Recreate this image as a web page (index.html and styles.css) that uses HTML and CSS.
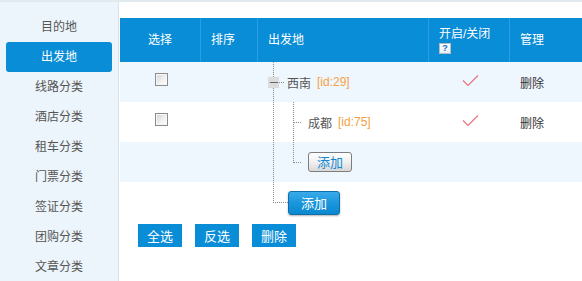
FILE: index.html
```html
<!DOCTYPE html>
<html lang="zh-CN">
<head>
<meta charset="utf-8">
<title>出发地</title>
<link rel="stylesheet" href="styles.css">
</head>
<body>
<div class="page">
  <aside class="side">
    <a class="side-item">目的地</a>
    <a class="side-item active">出发地</a>
    <a class="side-item">线路分类</a>
    <a class="side-item">酒店分类</a>
    <a class="side-item">租车分类</a>
    <a class="side-item">门票分类</a>
    <a class="side-item">签证分类</a>
    <a class="side-item">团购分类</a>
    <a class="side-item">文章分类</a>
  </aside>
  <main class="main">
    <table class="grid">
      <colgroup>
        <col class="c-sel"><col class="c-sort"><col class="c-name"><col class="c-open"><col class="c-mng">
      </colgroup>
      <thead>
        <tr>
          <th class="center">选择</th>
          <th>排序</th>
          <th>出发地</th>
          <th class="th-open">开启/关闭<br><span class="help">?</span></th>
          <th>管理</th>
        </tr>
      </thead>
      <tbody>
        <tr class="alt">
          <td class="center"><input type="checkbox" class="cb"></td>
          <td></td>
          <td class="tree tree-1">
            <div class="node">
              <span class="minus"><span class="minus-bar"></span></span>
              <span class="hdots short"></span>
              <span class="name">西南</span>
              <span class="nid">[id:29]</span>
            </div>
          </td>
          <td class="center"><svg class="check" width="17" height="13" viewBox="0 0 17 13"><polyline points="1,6.5 6,11.5 16,1.5" fill="none" stroke="#e9727c" stroke-width="1.2"/></svg></td>
          <td><a class="del">删除</a></td>
        </tr>
        <tr>
          <td class="center"><input type="checkbox" class="cb"></td>
          <td></td>
          <td class="tree tree-2">
            <div class="node sub">
              <span class="hdots long"></span>
              <span class="name">成都</span>
              <span class="nid">[id:75]</span>
            </div>
          </td>
          <td class="center"><svg class="check" width="17" height="13" viewBox="0 0 17 13"><polyline points="1,6.5 6,11.5 16,1.5" fill="none" stroke="#e9727c" stroke-width="1.2"/></svg></td>
          <td><a class="del">删除</a></td>
        </tr>
        <tr class="alt">
          <td></td>
          <td></td>
          <td class="tree tree-3">
            <div class="node sub">
              <span class="hdots long"></span>
              <button class="btn-gray">添加</button>
            </div>
          </td>
          <td></td>
          <td></td>
        </tr>
      </tbody>
    </table>
    <div class="tree-add">
      <span class="elbow"></span>
      <button class="btn-add">添加</button>
    </div>
    <div class="actions">
      <button class="btn-flat">全选</button>
      <button class="btn-flat">反选</button>
      <button class="btn-flat">删除</button>
    </div>
  </main>
</div>
</body>
</html>
```

FILE: styles.css
```css
* { box-sizing: border-box; }

html, body {
  margin: 0;
  padding: 0;
  background: #fff;
}

body {
  font-family: "Liberation Sans", "Noto Sans CJK SC", sans-serif;
  font-size: 12px;
  color: #555;
  overflow: hidden;
}

.page {
  display: flex;
  min-height: 100vh;
  border-top: 2px solid #e2e9ef;
}

/* sidebar */
.side {
  width: 119px;
  flex: none;
  background: #edf5fc;
  border-right: 1px solid #d6e2ec;
  padding-top: 10px;
}

.side-item {
  display: block;
  height: 30px;
  line-height: 30px;
  margin: 0 6px;
  text-align: center;
  font-size: 12px;
  color: #555;
  border-radius: 3px;
}

.side-item.active {
  background: #0a8dd7;
  color: #fff;
}

/* main */
.main {
  flex: 1;
  padding: 16px 0 0 1px;
}

.grid {
  table-layout: fixed;
  border-collapse: separate;
  border-spacing: 0;
  width: 462px;
}

.c-sel { width: 80px; }
.c-sort { width: 57px; }
.c-name { width: 171px; }
.c-open { width: 81px; }
.c-mng { width: 73px; }

.grid th {
  height: 44px;
  padding: 0 10px;
  background: #0a8dd7;
  color: #fff;
  font-weight: normal;
  font-size: 12px;
  text-align: left;
  line-height: 14px;
}

.grid th + th {
  border-left: 1px solid #2a9ee2;
}

.grid th.center, .grid td.center {
  text-align: center;
}

.th-open {
  line-height: 13px !important;
  padding-top: 2px !important;
}

.help {
  display: inline-block;
  width: 12px;
  height: 11px;
  margin-top: 2px;
  border: 1px solid #b5bcc4;
  background: linear-gradient(#ffffff, #e6eef5);
  color: #1568c0;
  font-size: 9px;
  font-weight: bold;
  line-height: 9px;
  text-align: center;
  vertical-align: top;
}

.grid td {
  height: 40px;
  padding: 0;
  font-size: 12px;
  color: #555;
  vertical-align: middle;
}

.grid tr.alt td {
  background-color: #eff7fe;
}

.cb {
  -webkit-appearance: none;
  appearance: none;
  display: inline-block;
  width: 13px;
  height: 13px;
  margin: 0 0 5px 2px;
  padding: 0;
  border: 1px solid #8c8c8c;
  background: linear-gradient(135deg, #d4d4d4 0%, #f2f2f2 60%, #ffffff 100%);
  box-shadow: inset 0 0 0 1px #f7f7f7;
  vertical-align: middle;
}

.check {
  display: inline-block;
  vertical-align: middle;
  margin: 0 0 4px 3px;
}

.del {
  display: inline-block;
  padding-left: 11px;
  color: #333;
}

/* tree */
.tree {
  background-repeat: no-repeat;
}

.tree-1 {
  background-image: repeating-linear-gradient(to bottom, #8a8a8a 0 1px, transparent 1px 2px);
  background-size: 1px 40px;
  background-position: 16px 0;
}

.tree-2 {
  background-image:
    repeating-linear-gradient(to bottom, #8a8a8a 0 1px, transparent 1px 2px),
    repeating-linear-gradient(to bottom, #8a8a8a 0 1px, transparent 1px 2px);
  background-size: 1px 40px, 1px 40px;
  background-position: 16px 0, 36px 0;
}

.tree-3 {
  background-image:
    repeating-linear-gradient(to bottom, #8a8a8a 0 1px, transparent 1px 2px),
    repeating-linear-gradient(to bottom, #8a8a8a 0 1px, transparent 1px 2px);
  background-size: 1px 40px, 1px 21px;
  background-position: 16px 0, 36px 0;
}

.node {
  display: flex;
  align-items: center;
  height: 40px;
  padding-left: 11px;
}

.node.sub {
  padding-left: 37px;
}

.minus {
  display: flex;
  align-items: center;
  justify-content: center;
  width: 11px;
  height: 11px;
  background: #dcdcdc;
  margin-top: 1px;
}

.minus-bar {
  width: 8px;
  height: 1px;
  background: #666;
}

.hdots {
  height: 1px;
  background-image: repeating-linear-gradient(to right, #8a8a8a 0 1px, transparent 1px 2px);
}

.hdots.short {
  width: 6px;
  margin-right: 2px;
}

.hdots.long {
  width: 8px;
  margin-right: 6px;
}

.name {
  color: #555;
}

.nid {
  margin-left: 6px;
  color: #f6a046;
  font-family: "Liberation Sans", sans-serif;
}

.btn-gray {
  width: 44px;
  height: 20px;
  padding: 0;
  border: 1px solid #7d7d7d;
  border-radius: 3px;
  background: linear-gradient(#ffffff 0%, #f1f1f1 50%, #d8d8d8 100%);
  color: #1288d2;
  font-family: "Noto Sans CJK SC", sans-serif;
  font-size: 13px;
  line-height: 18px;
}

.tree-add {
  display: flex;
  align-items: flex-start;
  margin-left: 153px;
}

.elbow {
  width: 15px;
  height: 21px;
  border-left: 1px dotted #8a8a8a;
  border-bottom: 1px dotted #8a8a8a;
}

.btn-add {
  width: 52px;
  height: 24px;
  margin-top: 9px;
  padding: 0;
  border: 1px solid #0f6ea8;
  border-radius: 3px;
  background: linear-gradient(#3aaaea 0%, #1a96dc 50%, #0a88d0 100%);
  box-shadow: 0 1px 2px rgba(0, 0, 0, 0.3);
  color: #fff;
  font-family: "Noto Sans CJK SC", sans-serif;
  font-size: 13px;
  line-height: 22px;
}

.actions {
  display: flex;
  gap: 13px;
  margin-top: 9px;
  padding-left: 18px;
}

.btn-flat {
  width: 44px;
  height: 23px;
  padding: 0;
  border: 0;
  background: #0a8dd7;
  color: #fff;
  font-family: "Noto Sans CJK SC", sans-serif;
  font-size: 13px;
  line-height: 23px;
}
```
